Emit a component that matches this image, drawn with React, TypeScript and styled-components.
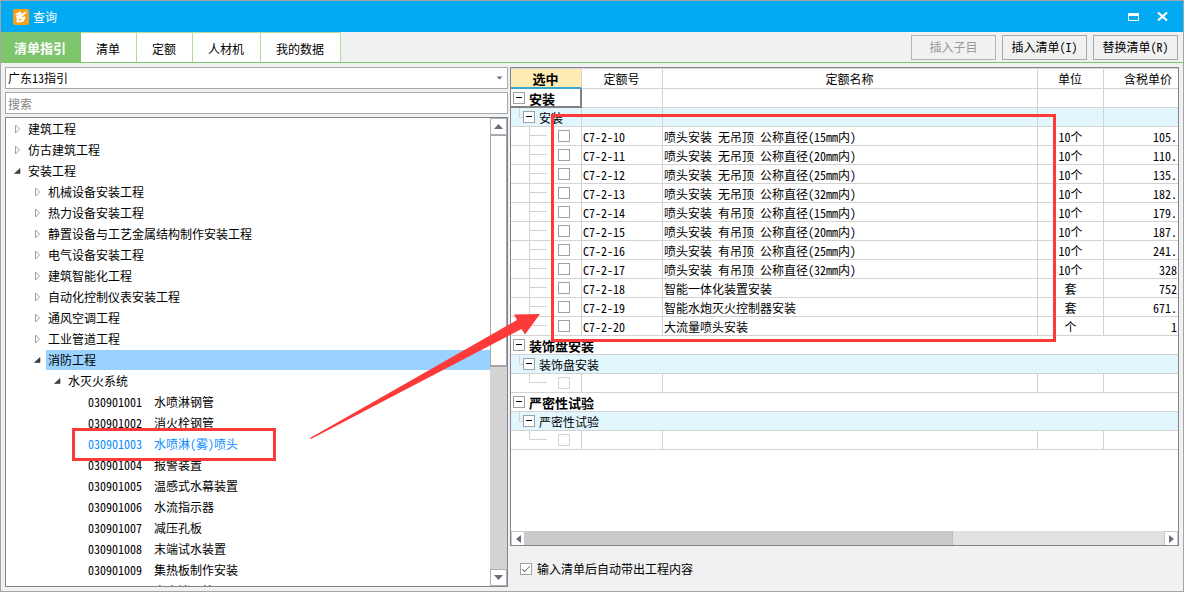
import React, { useState } from "react";
import styled, { createGlobalStyle, css } from "styled-components";

const GlobalStyle = createGlobalStyle`
  *, *::before, *::after { box-sizing: border-box; }
  body { margin: 0; background: #f1f1f1; }
  body, button, input, select, th, td {
    font-family: "Noto Sans Mono CJK SC", "Noto Sans CJK SC", sans-serif;
    font-size: 12px;
    line-height: 18px;
    color: #000;
  }
  button, input, select { margin: 0; padding: 0; border-radius: 0; outline: none; }
`;

const Window = styled.div`
  position: relative;
  display: flex;
  flex-direction: column;
  height: 100vh;
  min-height: 400px;
  border: 1px solid #a5a5a5;
  overflow: hidden;
  background: #f1f1f1;
`;

const TitleBar = styled.header`
  display: flex;
  align-items: center;
  flex: none;
  height: 31px;
  padding: 0 14px 0 12px;
  background: #02a9f3;
`;

const Title = styled.h1`
  flex: 1;
  margin: 0 0 0 4px;
  font-size: 12px;
  font-weight: 400;
  line-height: 18px;
  color: #fff;
`;

const WindowButton = styled.button`
  display: flex;
  align-items: center;
  justify-content: center;
  width: 13px;
  height: 20px;
  margin-left: 16px;
  border: 0;
  background: transparent;
`;

const Toolbar = styled.div`
  display: flex;
  align-items: stretch;
  flex: none;
  height: 31px;
  border-bottom: 1px solid #7dc56b;
`;

const Tabs = styled.nav`
  display: flex;
  flex: 1;
`;

const Tab = styled.button<{ $active?: boolean }>`
  padding: 2px 16px 0 15px;
  border: 0;
  border-top: 1px solid #b0df9c;
  border-right: 1px solid #b0df9c;
  background: #fff;
  white-space: nowrap;
  ${(p) =>
    p.$active &&
    css`
      padding: 0 14px 0 13px;
      border-color: #7fc56e;
      background: #7fc56e;
      color: #fff;
      font-size: 13px;
      font-weight: 700;
    `}
`;

const Actions = styled.div`
  display: flex;
  align-items: center;
  gap: 6px;
  padding-right: 5px;
`;

const ActionButton = styled.button`
  width: 85px;
  height: 25px;
  border: 1px solid #a8a8a8;
  background: #f1f1f1;
  white-space: nowrap;
  &:disabled {
    border-color: #b4b4b4;
    color: #999;
  }
`;

const Body = styled.main`
  display: flex;
  flex: 1;
  gap: 2px;
  min-height: 0;
  padding: 4px;
`;

const Sidebar = styled.section`
  display: flex;
  flex-direction: column;
  flex: 0 0 503px;
  gap: 3px;
`;

const SelectBox = styled.div`
  display: flex;
  align-items: center;
  flex: none;
  height: 22px;
  padding-right: 4px;
  border: 1px solid #a8a8a8;
  background: #fff;
`;

const LibrarySelect = styled.select`
  flex: 1;
  height: 20px;
  padding: 0 2px;
  border: 0;
  appearance: none;
  background: transparent;
`;

const SearchInput = styled.input`
  flex: none;
  height: 22px;
  padding: 0 2px;
  border: 1px solid #a8a8a8;
  background: #fff;
  &::placeholder { color: #848484; opacity: 1; }
`;

const TreePanel = styled.div`
  display: flex;
  flex: 1;
  min-height: 0;
  border: 1px solid #7f848f;
  background: #fff;
`;

const TreeList = styled.ul`
  flex: 1;
  margin: 0;
  padding: 0;
  overflow: hidden;
  list-style: none;
`;

const TreeRow = styled.li<{ $level: number }>`
  display: flex;
  height: 20px;
  margin-top: 1px;
  padding-left: ${(p) => p.$level * 20}px;
`;

const Toggle = styled.button`
  display: flex;
  align-items: center;
  flex: none;
  width: 20px;
  height: 20px;
  padding-left: 8px;
  border: 0;
  background: transparent;
`;

const ToggleSpace = styled.span`
  flex: none;
  width: 20px;
`;

const NodeLabel = styled.span<{ $selected?: boolean; $link?: boolean }>`
  display: flex;
  flex: 1;
  gap: 12px;
  padding-left: 2px;
  line-height: 20px;
  white-space: nowrap;
  background: ${(p) => (p.$selected ? "#99d1ff" : "transparent")};
  color: ${(p) => (p.$link ? "#0a8dff" : "#000")};
`;

const VScroll = styled.div`
  display: flex;
  flex-direction: column;
  flex: none;
  width: 17px;
  background: #d3d3d3;
`;

const ScrollButton = styled.button`
  display: flex;
  align-items: center;
  justify-content: center;
  flex: none;
  width: 17px;
  height: 17px;
  border: 1px solid #b0b0b0;
  background: #fff;
`;

const VTrack = styled.div`
  flex: 1;
`;

const VThumb = styled.div`
  height: 53.5%;
  border: 1px solid #a5a5a5;
  border-bottom-width: 2px;
  background: #fff;
`;

const Content = styled.section`
  display: flex;
  flex-direction: column;
  flex: 1;
  min-width: 0;
`;

const GridPanel = styled.div`
  display: flex;
  flex-direction: column;
  flex: 1;
  min-height: 0;
  border: 1px solid #7f848f;
  background: #fff;
`;

const GridArea = styled.div`
  flex: 1;
  min-height: 0;
  overflow: hidden;
  border-top: 1px solid #d8d8d8;
`;

const Table = styled.table`
  width: 100%;
  table-layout: fixed;
  border-collapse: separate;
  border-spacing: 0;
`;

const HeadCell = styled.th<{ $active?: boolean; $end?: boolean }>`
  height: 20px;
  padding: 0 6px 0 5px;
  border-right: 1px solid #d3d3d3;
  border-bottom: 1px solid #d3d3d3;
  font-weight: 400;
  text-align: center;
  white-space: nowrap;
  ${(p) =>
    p.$active &&
    css`
      padding-top: 1px;
      border-bottom: 2px solid #3da4cc;
      background: #ffecb5;
      font-size: 13px;
      font-weight: 700;
      line-height: 16px;
    `}
  ${(p) =>
    p.$end &&
    css`
      border-right: 0;
      text-align: right;
    `}
`;

const Row = styled.tr<{ $tint?: boolean }>`
  background: ${(p) => (p.$tint ? "#e2f6fe" : "#fff")};
`;

const Cell = styled.td<{ $align?: "center" | "right"; $focus?: boolean }>`
  height: 19px;
  padding: 2px 1px 0;
  border-right: 1px solid #d3d3d3;
  border-bottom: 1px solid #d3d3d3;
  overflow: hidden;
  line-height: 16px;
  text-align: ${(p) => p.$align || "left"};
  white-space: nowrap;
  &:first-child { padding: 0; }
  &:last-child { border-right: 0; }
  ${(p) =>
    p.$focus &&
    css`
      box-shadow: inset -1px -1px #808080;
      border-color: #808080;
    `}
`;

const TreeCell = styled.div<{ $root?: boolean }>`
  display: flex;
  align-items: center;
  height: 18px;
  padding-left: ${(p) => (p.$root ? 2 : 0)}px;
`;

const Collapse = styled.button`
  display: flex;
  align-items: center;
  justify-content: center;
  flex: none;
  width: 12px;
  height: 12px;
  border: 1px solid #a0a0a0;
  background: #fff;
`;

const GroupLabel = styled.span<{ $bold?: boolean }>`
  padding: 2px 0 0 4px;
  font-size: ${(p) => (p.$bold ? 13 : 12)}px;
  font-weight: ${(p) => (p.$bold ? 700 : 400)};
`;

const CheckBox = styled.input`
  flex: none;
  display: grid;
  place-items: center;
  width: 12px;
  height: 12px;
  border: 1px solid #a0a0a0;
  appearance: none;
  background: #fff;
  &:disabled { border-color: #d3d3d3; }
  &:checked::after {
    content: "";
    width: 8px;
    height: 4px;
    border: solid #77778c;
    border-width: 0 0 1px 1px;
    transform: translateY(-1px) rotate(-45deg);
  }
`;

const RowCheck = styled(CheckBox)`
  margin-left: 11px;
`;

const HScroll = styled.div`
  display: flex;
  flex: none;
  height: 14px;
  background: #e1e1e1;
`;

const HScrollButton = styled(ScrollButton)`
  width: 14px;
  height: 14px;
  border-color: #c8c8c8;
  border-bottom: 0;
`;

const HTrack = styled.div`
  flex: 1;
`;

const HThumb = styled.div`
  width: 67%;
  height: 14px;
  border-right: 1px solid #bdbdbd;
  background: #cacaca;
`;

const Footer = styled.label`
  display: flex;
  align-items: center;
  gap: 5px;
  flex: none;
  height: 41px;
  padding: 4px 0 0 10px;
`;

const Markup = styled.svg`
  position: absolute;
  top: -1px;
  left: -1px;
  pointer-events: none;
`;

type Node = { level: number; text: string; code?: string; open?: boolean; selected?: boolean; link?: boolean };

const nodes: Node[] = [
  { level: 0, text: "建筑工程" },
  { level: 0, text: "仿古建筑工程" },
  { level: 0, text: "安装工程", open: true },
  { level: 1, text: "机械设备安装工程" },
  { level: 1, text: "热力设备安装工程" },
  { level: 1, text: "静置设备与工艺金属结构制作安装工程" },
  { level: 1, text: "电气设备安装工程" },
  { level: 1, text: "建筑智能化工程" },
  { level: 1, text: "自动化控制仪表安装工程" },
  { level: 1, text: "通风空调工程" },
  { level: 1, text: "工业管道工程" },
  { level: 1, text: "消防工程", open: true, selected: true },
  { level: 2, text: "水灭火系统", open: true },
  { level: 3, code: "030901001", text: "水喷淋钢管" },
  { level: 3, code: "030901002", text: "消火栓钢管" },
  { level: 3, code: "030901003", text: "水喷淋(雾)喷头", link: true },
  { level: 3, code: "030901004", text: "报警装置" },
  { level: 3, code: "030901005", text: "温感式水幕装置" },
  { level: 3, code: "030901006", text: "水流指示器" },
  { level: 3, code: "030901007", text: "减压孔板" },
  { level: 3, code: "030901008", text: "末端试水装置" },
  { level: 3, code: "030901009", text: "集热板制作安装" },
  { level: 3, code: "030901010", text: "室内消火栓" },
];

const items = [
  ["C7-2-10", "喷头安装 无吊顶 公称直径(15mm内)", "10个", "105."],
  ["C7-2-11", "喷头安装 无吊顶 公称直径(20mm内)", "10个", "110."],
  ["C7-2-12", "喷头安装 无吊顶 公称直径(25mm内)", "10个", "135."],
  ["C7-2-13", "喷头安装 无吊顶 公称直径(32mm内)", "10个", "182."],
  ["C7-2-14", "喷头安装 有吊顶 公称直径(15mm内)", "10个", "179."],
  ["C7-2-15", "喷头安装 有吊顶 公称直径(20mm内)", "10个", "187."],
  ["C7-2-16", "喷头安装 有吊顶 公称直径(25mm内)", "10个", "241."],
  ["C7-2-17", "喷头安装 有吊顶 公称直径(32mm内)", "10个", "328"],
  ["C7-2-18", "智能一体化装置安装", "套", "752"],
  ["C7-2-19", "智能水炮灭火控制器安装", "套", "671."],
  ["C7-2-20", "大流量喷头安装", "个", "1"],
];

const tabs = ["清单指引", "清单", "定额", "人材机", "我的数据"];

const Logo = () => (
  <svg width="16" height="16" viewBox="0 0 16 16" aria-hidden="true">
    <rect width="16" height="16" rx="2" fill="#f8a11c" />
    <g fill="none" stroke="#fff" strokeLinecap="round" strokeLinejoin="round">
      <path d="M3.5 5.5 L7 3.5 L8 5.5 L4 8" strokeWidth="2" />
      <path d="M12.5 3.5 L5 9.5 L4.5 12.5 L9.5 12 L11.5 8.5 L8 9.5" strokeWidth="2" />
    </g>
  </svg>
);

const Arrow = ({ d, w, h }: { d: string; w: number; h: number }) => (
  <svg width={w} height={h} viewBox={`0 0 ${w} ${h}`} aria-hidden="true">
    <path d={d} fill="#6c6c7c" />
  </svg>
);

const NodeIcon = ({ open }: { open?: boolean }) =>
  open ? (
    <svg width="7" height="7" viewBox="0 0 7 7" aria-hidden="true">
      <path d="M6 0.5 V5.5 H0.5 Z" fill="#404040" stroke="#222" strokeWidth="0.5" />
    </svg>
  ) : (
    <svg width="7" height="10" viewBox="0 0 7 10" aria-hidden="true">
      <path d="M1.5 1 L5.5 5 L1.5 9 Z" fill="#fff" stroke="#a0a0a0" />
    </svg>
  );

const GroupGuide = () => (
  <svg width="12" height="18" viewBox="0 0 12 18" aria-hidden="true">
    <path d="M8.5 0 V9.5 H12" fill="none" stroke="#d3d3d3" />
  </svg>
);

const ItemGuide = ({ last }: { last?: boolean }) => (
  <svg width="36" height="18" viewBox="0 0 36 18" aria-hidden="true">
    <path d={last ? "M18.5 0 V8.5 H36" : "M18.5 0 V18 M18.5 8.5 H36"} fill="none" stroke="#d3d3d3" />
  </svg>
);

const Group = ({ name, child }: { name: string; child?: boolean }) => (
  <TreeCell $root={!child}>
    {child && <GroupGuide />}
    <Collapse aria-label={`折叠 ${name}`}>
      <svg width="6" height="2" viewBox="0 0 6 2" aria-hidden="true">
        <path d="M0 0.5 H6" stroke="#000" />
      </svg>
    </Collapse>
    <GroupLabel $bold={!child}>{name}</GroupLabel>
  </TreeCell>
);

const EmptyGroup = ({ name }: { name: string }) => (
  <>
    <Row>
      <Cell colSpan={5}><Group name={name} /></Cell>
    </Row>
    <Row $tint>
      <Cell colSpan={5}><Group name={name} child /></Cell>
    </Row>
    <Row>
      <Cell>
        <TreeCell>
          <ItemGuide last />
          <RowCheck type="checkbox" disabled aria-label={name} />
        </TreeCell>
      </Cell>
      <Cell /><Cell /><Cell /><Cell />
    </Row>
  </>
);

export default function App() {
  const [auto, setAuto] = useState(true);
  return (
    <Window>
      <GlobalStyle />
      <TitleBar>
        <Logo />
        <Title>查询</Title>
        <WindowButton aria-label="最大化">
          <svg width="11" height="8" viewBox="0 0 11 8"><path d="M0 0 H11 V8 H0 Z M1 3 V7 H10 V3 Z" fill="#fff" fillRule="evenodd" /></svg>
        </WindowButton>
        <WindowButton aria-label="关闭">
          <svg width="11" height="9" viewBox="0 0 11 9"><path d="M1 0.5 L10 8.5 M10 0.5 L1 8.5" stroke="#fff" strokeWidth="2.2" /></svg>
        </WindowButton>
      </TitleBar>
      <Toolbar>
        <Tabs>
          {tabs.map((t, i) => (
            <Tab key={t} $active={i === 0}>{t}</Tab>
          ))}
        </Tabs>
        <Actions>
          <ActionButton disabled>插入子目</ActionButton>
          <ActionButton>插入清单(I)</ActionButton>
          <ActionButton>替换清单(R)</ActionButton>
        </Actions>
      </Toolbar>
      <Body>
        <Sidebar>
          <SelectBox>
            <LibrarySelect aria-label="指引库">
              <option>广东13指引</option>
            </LibrarySelect>
            <Arrow w={7} h={4} d="M0.5 0.5 H6.5 L3.5 3.5 Z" />
          </SelectBox>
          <SearchInput type="text" placeholder="搜索" aria-label="搜索" />
          <TreePanel>
            <TreeList>
              {nodes.map((n) => (
                <TreeRow key={n.code || n.text} $level={n.level}>
                  {n.code ? (
                    <ToggleSpace />
                  ) : (
                    <Toggle aria-label={`展开 ${n.text}`}><NodeIcon open={n.open} /></Toggle>
                  )}
                  <NodeLabel $selected={n.selected} $link={n.link}>
                    {n.code && <span>{n.code}</span>}
                    <span>{n.text}</span>
                  </NodeLabel>
                </TreeRow>
              ))}
            </TreeList>
            <VScroll>
              <ScrollButton aria-label="向上滚动"><Arrow w={9} h={5} d="M0 5 L4.5 0 L9 5 Z" /></ScrollButton>
              <VTrack><VThumb /></VTrack>
              <ScrollButton aria-label="向下滚动"><Arrow w={9} h={5} d="M0 0 L4.5 5 L9 0 Z" /></ScrollButton>
            </VScroll>
          </TreePanel>
        </Sidebar>
        <Content>
          <GridPanel>
            <GridArea>
              <Table>
                <colgroup>
                  <col style={{ width: 71 }} />
                  <col style={{ width: 81 }} />
                  <col />
                  <col style={{ width: 66 }} />
                  <col style={{ width: 74 }} />
                </colgroup>
                <thead>
                  <tr>
                    <HeadCell $active>选中</HeadCell>
                    <HeadCell>定额号</HeadCell>
                    <HeadCell>定额名称</HeadCell>
                    <HeadCell>单位</HeadCell>
                    <HeadCell $end>含税单价</HeadCell>
                  </tr>
                </thead>
                <tbody>
                  <Row>
                    <Cell $focus><Group name="安装" /></Cell>
                    <Cell /><Cell /><Cell /><Cell />
                  </Row>
                  <Row $tint>
                    <Cell><Group name="安装" child /></Cell>
                    <Cell /><Cell /><Cell /><Cell />
                  </Row>
                  {items.map(([code, name, unit, price], i) => (
                    <Row key={code}>
                      <Cell>
                        <TreeCell>
                          <ItemGuide last={i === items.length - 1} />
                          <RowCheck type="checkbox" aria-label={code} />
                        </TreeCell>
                      </Cell>
                      <Cell>{code}</Cell>
                      <Cell>{name}</Cell>
                      <Cell $align="center">{unit}</Cell>
                      <Cell $align="right">{price}</Cell>
                    </Row>
                  ))}
                  <EmptyGroup name="装饰盘安装" />
                  <EmptyGroup name="严密性试验" />
                </tbody>
              </Table>
            </GridArea>
            <HScroll>
              <HScrollButton aria-label="向左滚动"><Arrow w={5} h={8} d="M5 0 L0 4 L5 8 Z" /></HScrollButton>
              <HTrack><HThumb /></HTrack>
              <HScrollButton aria-label="向右滚动"><Arrow w={5} h={8} d="M0 0 L5 4 L0 8 Z" /></HScrollButton>
            </HScroll>
          </GridPanel>
          <Footer>
            <CheckBox type="checkbox" checked={auto} onChange={(e) => setAuto(e.target.checked)} />
            输入清单后自动带出工程内容
          </Footer>
        </Content>
      </Body>
      <Markup width="1060" height="470" viewBox="0 0 1060 470" aria-hidden="true">
        <g fill="none" stroke="#fb3a39" strokeWidth="3">
          <rect x="73.5" y="429.5" width="201" height="30" />
          <rect x="552.5" y="115.5" width="502" height="225" />
        </g>
        <path d="M310 438 L517 320 L514 314.5 L540 314 L525 334.5 L521.5 329 L311 439 Z" fill="#fb3a39" />
      </Markup>
    </Window>
  );
}
